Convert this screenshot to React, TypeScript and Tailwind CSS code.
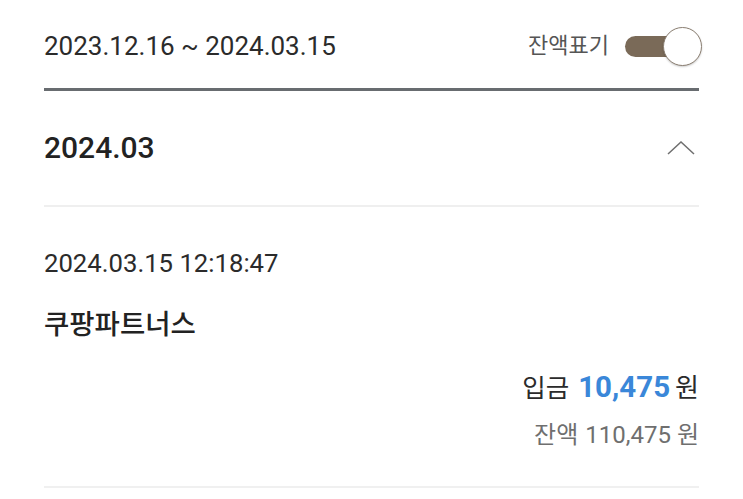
import React from "react";

const FONT = "font-['Roboto','Noto_Sans_CJK_KR',sans-serif]";

export default function App() {
  return (
    <div className={`w-[743px] h-[499px] bg-white overflow-hidden px-[44px] text-[#262626] ${FONT}`}>
      {/* Header row */}
      <div className="h-[88px] pt-[4px] flex items-center justify-between">
        <div className="text-[26px] leading-none text-[#2b2b2b]">2023.12.16 ~ 2024.03.15</div>
        <div className="flex items-center gap-[16px]">
          <span className="text-[22px] leading-none text-[#555]">잔액표기</span>
          <div className="relative w-[77px] h-[40px] -mr-[3px]">
            <div className="absolute left-0 top-[10px] w-[58px] h-[21px] rounded-full bg-[#7a6a58]" />
            <div className="absolute right-0 top-[1px] w-[39px] h-[39px] rounded-full bg-white border-[1.5px] border-[#8b7f72] shadow-[0_1px_2px_rgba(0,0,0,0.2)]" />
          </div>
        </div>
      </div>
      <div className="h-[3px] bg-[#686c70]" />

      {/* Month header */}
      <div className="h-[114px] flex items-center justify-between">
        <div className="text-[30px] font-medium leading-none text-[#222]">2024.03</div>
        <svg width="28" height="14" viewBox="0 0 28 14" className="mr-[4px]">
          <polyline points="1,13 14,1 27,13" fill="none" stroke="#6f6f6f" strokeWidth="1.5" />
        </svg>
      </div>
      <div className="h-[2px] bg-[#efefef]" />

      {/* Transaction */}
      <div className="pt-[40px] flex flex-col">
        <div className="text-[25.7px] leading-[32px] text-[#2b2b2b]">2024.03.15 12:18:47</div>
        <div className="mt-[30px] text-[27.5px] font-medium leading-[32px] text-[#222]">쿠팡파트너스</div>
        <div className="mt-[28px] flex justify-end items-baseline leading-[36px] text-[#2b2b2b]">
          <span className="text-[25.5px]">입금</span>
          <span className="ml-[9px] text-[29.5px] font-bold text-[#3a87d9]">10,475</span>
          <span className="ml-[5px] text-[26px]">원</span>
        </div>
        <div className="mt-[14px] flex justify-end items-baseline text-[24px] leading-[30px] text-[#6f6f6f]">
          <span>잔액</span>
          <span className="ml-[7px]">110,475</span>
          <span className="ml-[6px]">원</span>
        </div>
        <div className="mt-[36px] h-[2px] bg-[#f0f0f0]" />
      </div>
    </div>
  );
}
